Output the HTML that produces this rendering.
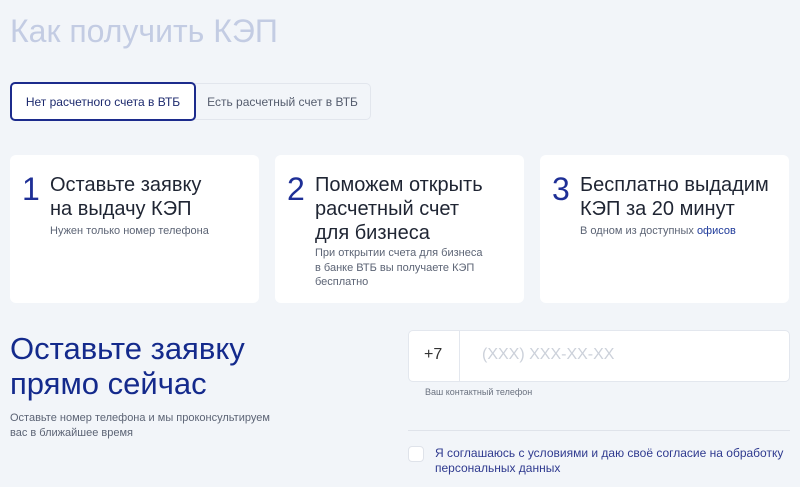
<!DOCTYPE html>
<html><head><meta charset="utf-8"><style>
*{margin:0;padding:0;box-sizing:border-box}
body{width:800px;height:487px;background:#f2f5f9;font-family:"Liberation Sans","Noto Sans CJK JP",sans-serif;position:relative;overflow:hidden}
.a{position:absolute}
h1{position:absolute;left:10px;top:13px;font-size:32px;font-weight:400;color:#c3cce3;letter-spacing:0}
.tab1{left:10px;top:82px;width:186px;height:39px;border:2px solid #1c2b8c;border-radius:5px;background:#fff;font-size:12px;color:#1d2a6e;display:flex;align-items:center;justify-content:center}
.tab2{left:195px;top:83px;width:176px;height:37px;border:1px solid #e2e6ed;border-left:none;border-radius:0 5px 5px 0;font-size:12px;color:#555d6e;display:flex;align-items:center;justify-content:center}
.card{top:155px;width:249px;height:148px;background:#fff;border-radius:6px}
.num{position:absolute;left:12px;top:16px;font-size:32px;color:#1e2f96}
.hd{position:absolute;left:40px;top:18px;font-size:20px;line-height:24px;color:#1f2533}
.sb{position:absolute;left:40px;font-size:11px;line-height:14.5px;color:#5c6475}
.big{left:10px;top:331px;font-size:31px;line-height:35px;color:#142a8c;letter-spacing:0}
</style></head><body>
<h1>Как получить КЭП</h1>
<div class="a tab1">Нет расчетного счета в ВТБ</div>
<div class="a tab2">Есть расчетный счет в ВТБ</div>
<div class="a card" style="left:10px"><div class="num">1</div><div class="hd">Оставьте заявку<br>на выдачу КЭП</div><div class="sb" style="top:69px">Нужен только номер телефона</div></div>
<div class="a card" style="left:275px"><div class="num">2</div><div class="hd">Поможем открыть<br>расчетный счет<br>для бизнеса</div><div class="sb" style="top:91px">При открытии счета для бизнеса<br>в банке ВТБ вы получаете КЭП<br>бесплатно</div></div>
<div class="a card" style="left:540px"><div class="num">3</div><div class="hd">Бесплатно выдадим<br>КЭП за 20 минут</div><div class="sb" style="top:69px">В одном из доступных <span style="color:#1e3a9a">офисов</span></div></div>
<div class="a big">Оставьте заявку<br>прямо сейчас</div>
<div class="a" style="left:10px;top:411px;font-size:11px;line-height:15px;color:#5c6475">Оставьте номер телефона и мы проконсультируем<br>вас в ближайшее время</div>
<div class="a" style="left:408px;top:330px;width:382px;height:52px;background:#fff;border:1px solid #e3e7ee;border-radius:5px"></div>
<div class="a" style="left:459px;top:331px;width:1px;height:50px;background:#e3e7ee"></div>
<div class="a" style="left:424px;top:346px;font-size:16px;color:#333">+7</div>
<div class="a" style="left:482px;top:346px;font-size:16px;color:#ccd1da">(XXX) XXX-XX-XX</div>
<div class="a" style="left:425px;top:387px;font-size:9px;color:#6b7280">Ваш контактный телефон</div>
<div class="a" style="left:408px;top:430px;width:382px;height:1px;background:#dfe3ea"></div>
<div class="a" style="left:408px;top:446px;width:16px;height:16px;background:#fff;border:1px solid #dfe3ea;border-radius:4px"></div>
<div class="a" style="left:435px;top:446px;font-size:12px;line-height:15px;color:#2f3a8f">Я соглашаюсь с условиями и даю своё согласие на обработку<br>персональных данных</div>
</body></html>
